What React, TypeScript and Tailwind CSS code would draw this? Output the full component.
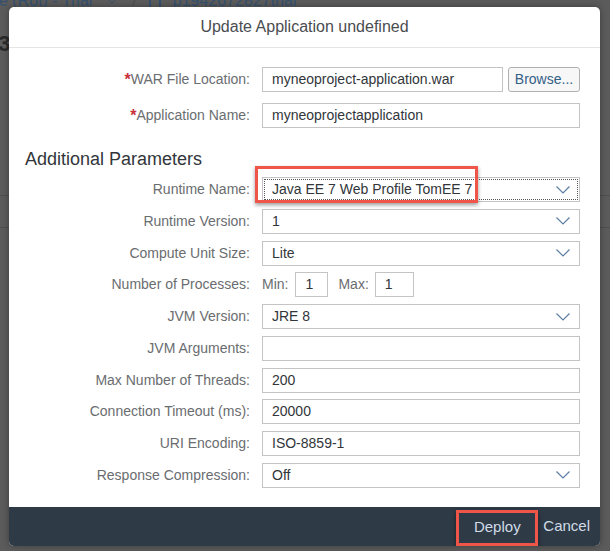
import { ChevronDown } from "lucide-react";

const font = { fontFamily: '"Liberation Sans", Arial, sans-serif' };

const Chevron = () => (
  <svg width="16" height="10" viewBox="0 0 16 10" className="shrink-0">
    <polyline points="1.5,1.5 8,8 14.5,1.5" fill="none" stroke="#5b7ea5" strokeWidth="1.2" />
  </svg>
);

const Label = ({ text, required }: { text: string; required?: boolean }) => (
  <div className="flex items-center justify-end text-[14px] text-[#6a6d70] whitespace-nowrap">
    {required && <span className="text-[#c8303a] font-bold text-[16px] leading-none">*</span>}
    {text}
  </div>
);

const Field = ({ value, className = "" }: { value: string; className?: string }) => (
  <div
    className={
      "h-[25px] flex items-center border border-[#c4c4c4] bg-white pl-[9px] text-[14px] text-[#32363a] " +
      className
    }
  >
    {value}
  </div>
);

const Select = ({ value, focused }: { value: string; focused?: boolean }) => (
  <div className="h-[25px] flex items-center border border-[#c4c4c4] bg-white p-[1px]">
    <div
      className={
        "flex h-full w-full items-center justify-between pl-[8px] pr-[7px] text-[14px] text-[#32363a] " +
        (focused ? "outline-1 outline-dotted outline-[#555] -outline-offset-1" : "")
      }
    >
      <span>{value}</span>
      <Chevron />
    </div>
  </div>
);

export default function App() {
  const rows: { label: string; kind: "select" | "input" | "procs"; value: string; focused?: boolean }[] = [
    { label: "Runtime Name:", kind: "select", value: "Java EE 7 Web Profile TomEE 7", focused: true },
    { label: "Runtime Version:", kind: "select", value: "1" },
    { label: "Compute Unit Size:", kind: "select", value: "Lite" },
    { label: "Number of Processes:", kind: "procs", value: "" },
    { label: "JVM Version:", kind: "select", value: "JRE 8" },
    { label: "JVM Arguments:", kind: "input", value: "" },
    { label: "Max Number of Threads:", kind: "input", value: "200" },
    { label: "Connection Timeout (ms):", kind: "input", value: "20000" },
    { label: "URI Encoding:", kind: "input", value: "ISO-8859-1" },
    { label: "Response Compression:", kind: "select", value: "Off" },
  ];

  return (
    <div className="relative w-[610px] h-[551px] overflow-hidden bg-[#5b5b5b]" style={font}>
      {/* page behind the modal, dimmed */}
      <div className="-mt-[8px] flex items-center gap-[12px] text-[16px] leading-[18px] text-[#34506f] whitespace-nowrap">
        <span className="-ml-[1px]">e (Rot) - Trial</span>
        <ChevronDown size={16} strokeWidth={1.5} />
        <span className="text-[#4d4d4d]">/</span>
        <span className="inline-block w-[12px] h-[15px] border-[2px] border-[#34506f] rounded-[1px]" />
        <span>p1942672827trial</span>
      </div>
      <div className="mt-[22px] -ml-[14px] text-[22px] leading-[24px] font-bold text-[#2a2a2a]">832</div>
      <div className="mt-[139px] border-t border-[#4e4e4e]" />
      <div className="mt-[31px] border-t border-[#4e4e4e]" />

      {/* modal */}
      <div className="absolute left-[9px] top-[7px] w-[591px] h-[539px] flex flex-col rounded-[5px] bg-white overflow-hidden shadow-[0_0_6px_rgba(0,0,0,0.35)]">
        <div className="h-[41px] shrink-0 flex items-center justify-center border-b border-[#e5e5e5] text-[16px] text-[#4a4d50]">
          Update Application undefined
        </div>

        <div className="flex-1 flex flex-col">
          <div className="pt-[19px] grid grid-cols-[241px_318px] gap-x-[12px] gap-y-[11px]">
            <Label text="WAR File Location:" required />
            <div className="flex gap-[5px]">
              <Field value="myneoproject-application.war" className="flex-1" />
              <div className="h-[25px] w-[72px] flex items-center justify-center rounded-[3px] border border-[#b0b0b0] bg-[#f7f7f7] text-[14px] text-[#346187]">
                Browse...
              </div>
            </div>
            <Label text="Application Name:" required />
            <Field value="myneoprojectapplication" />
          </div>

          <div className="mt-[20px] pl-[16px] text-[18px] leading-[22px] text-[#32363a]">Additional Parameters</div>

          <div className="relative mt-[7px] grid grid-cols-[241px_318px] gap-x-[12px] gap-y-[6.75px]">
            {rows.map((r) => (
              <div key={r.label} className="contents">
                <Label text={r.label} />
                {r.kind === "select" && <Select value={r.value} focused={r.focused} />}
                {r.kind === "input" && <Field value={r.value} />}
                {r.kind === "procs" && (
                  <div className="h-[25px] flex items-center text-[14px] text-[#6a6d70]">
                    <span>Min:</span>
                    <Field value="1" className="ml-[7px] w-[33px]" />
                    <span className="ml-[10px]">Max:</span>
                    <Field value="1" className="ml-[6px] w-[39px]" />
                  </div>
                )}
              </div>
            ))}
            {/* annotation box */}
            <div className="absolute left-[246px] -top-[11px] w-[223px] h-[37px] border-[3px] border-[#ef5548] shadow-[0_2px_4px_rgba(0,0,0,0.4)]" />
          </div>
        </div>

        <div className="h-[39px] shrink-0 flex items-center justify-end bg-[#2e3a46] pr-[10px] text-[15px] text-[#d0dbe6]">
          <div className="relative h-[36px] w-[82px] mt-[2px] flex items-center justify-center border-[3px] border-[#ef5548] shadow-[0_2px_4px_rgba(0,0,0,0.5)]">
            Deploy
          </div>
          <span className="ml-[5px]">Cancel</span>
        </div>
      </div>
    </div>
  );
}
